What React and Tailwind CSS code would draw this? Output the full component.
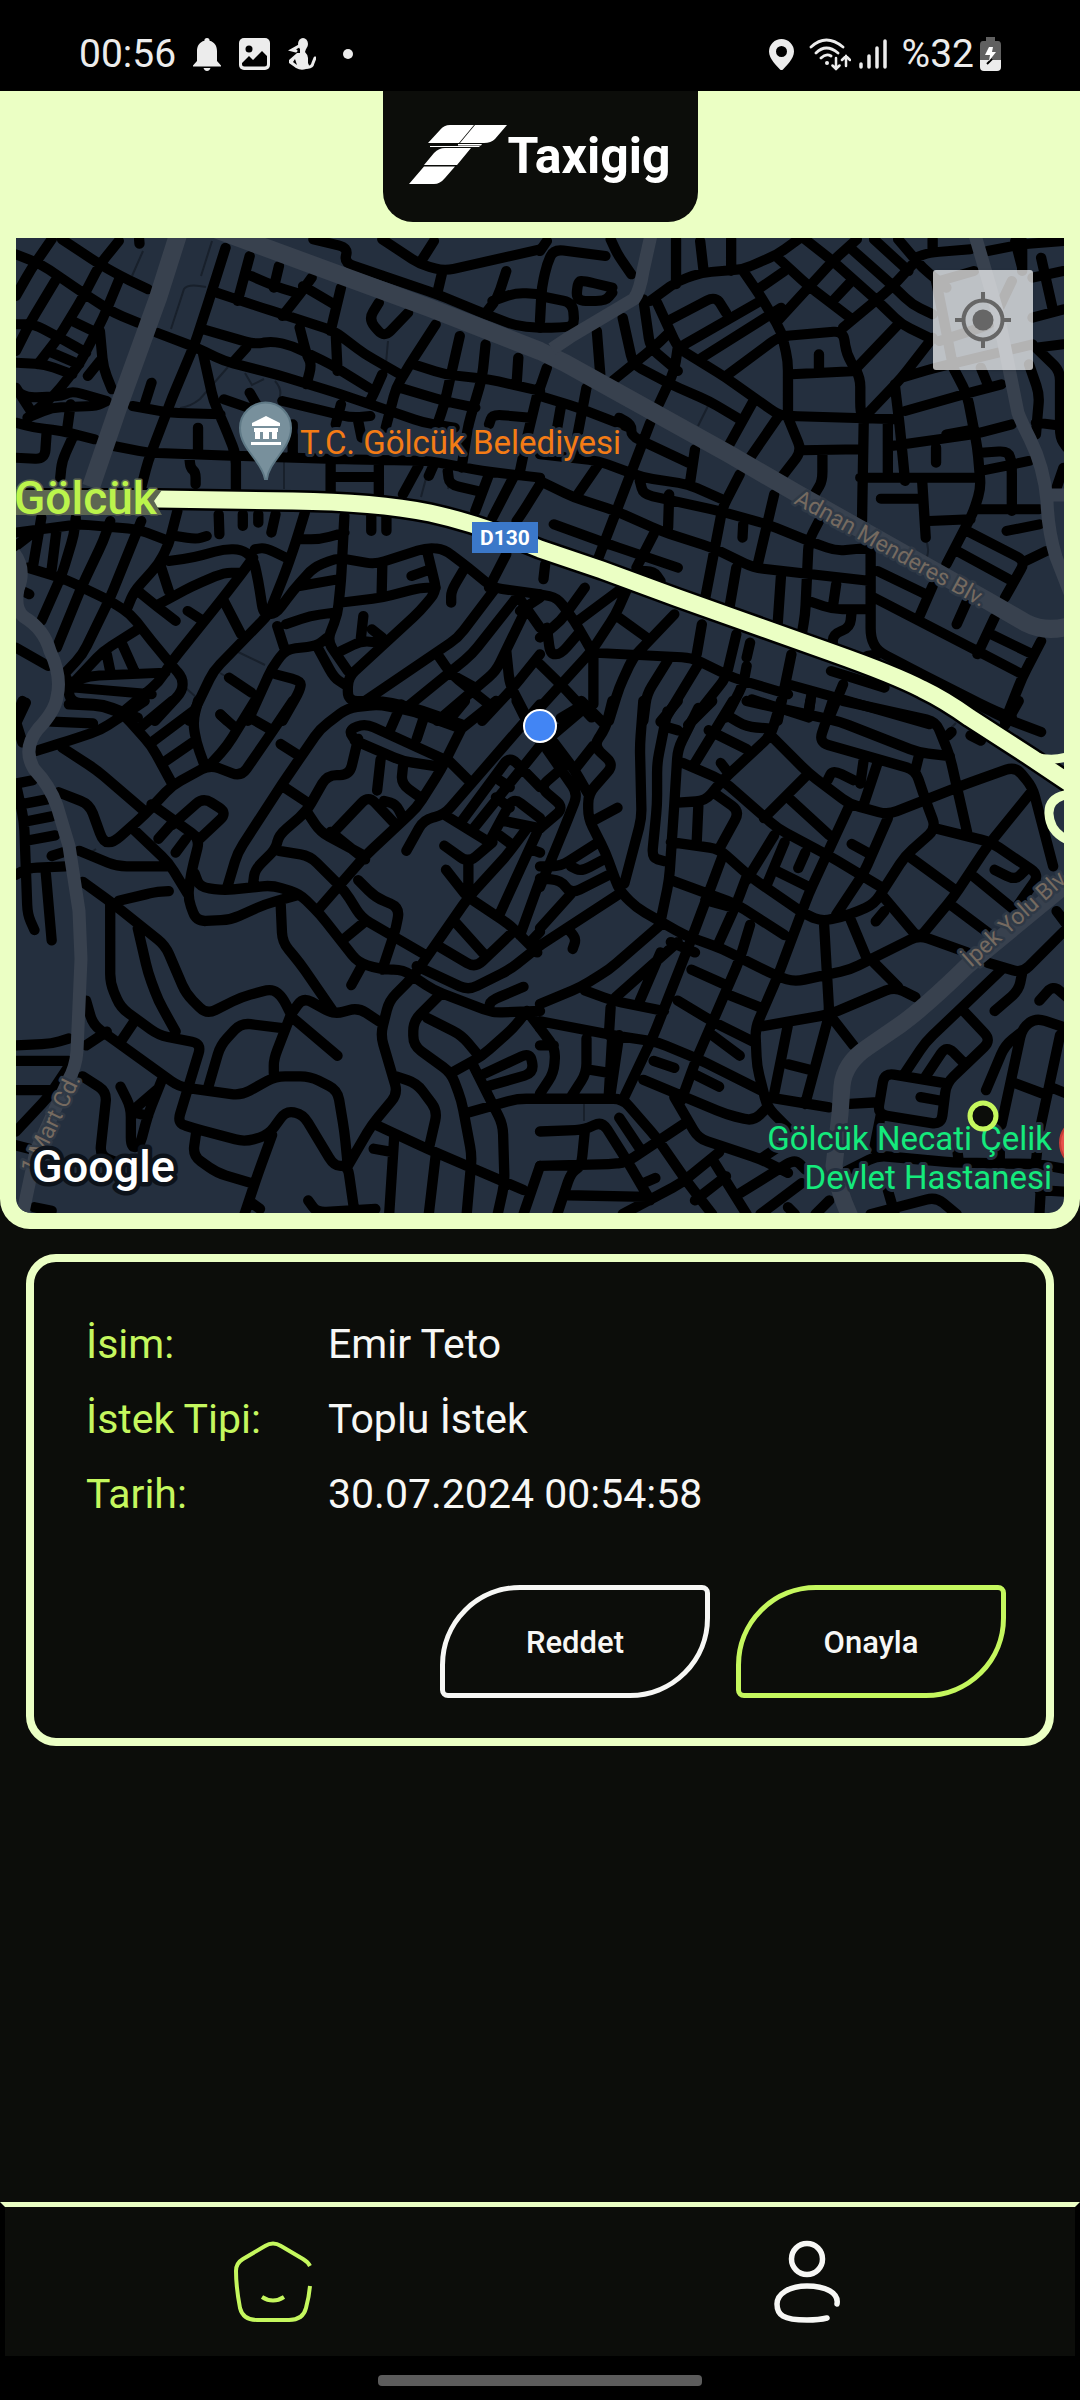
import React from "react";

/* Each road is a run of "x y" pairs; roads are separated by "|". */
const NW = `46 100 120 130 240 215 330 275 400 305|150 55 90 145 46 225|180 55 290 130 350 165 430 205|345 60 290 130 240 230 170 350 110 430|160 180 90 300 46 390|350 165 300 290 230 430 160 520 80 590|46 310 100 310 190 360 250 395|210 300 290 340|150 395 230 430|46 425 130 430 210 460|290 330 300 440 325 505|290 420 255 465|46 510 80 530 180 525 210 510 310 540|46 500 90 570|80 590 150 560 280 555 310 540|46 605 100 620 180 630 275 655|205 550 195 625|135 640 130 715 46 710|215 640 180 720 175 770|404 55 405 68|440 485 420 550|655 80 600 260 565 370 500 530 430 720 410 800|455 335 570 380 650 420 800 460 960 510 1090 555 1230 605 1320 620|385 555 490 575 640 580|590 400 620 540 650 610 685 700 685 810|590 325 740 370 790 360 850 375 960 430 1070 500|715 380 680 420|630 215 760 260 970 330 1060 400 1170 465|725 105 690 240|810 135 795 200|730 165 795 195 860 215|905 170 870 220 820 285|880 195 970 250|990 200 960 330|870 320 890 400 905 430 890 490|975 340 980 450|1100 245 1070 295 1115 350 1185 275|910 55 1010 80 1000 125 1100 160 1270 220 1410 280 1500 315 1568 320|1110 55 1220 130 1290 150 1568 85|1260 60 1220 125|1285 150 1270 215|1470 150 1445 230 1415 270|1430 240 1500 215 1568 220|1265 310 1190 430 1150 500 1120 620|1335 345 1290 550 1270 610|1200 430 1290 460 1420 475 1568 510|1410 370 1400 470 1360 610 1340 740|1505 410 1500 490|1160 500 1290 540 1380 560|1110 460 1080 530 1070 545|650 535 720 560|725 515 750 560|820 540 900 560 1020 590 1075 585|990 550 975 610|1040 600 1050 650|1420 610 1430 580 1540 590|1565 500 1530 650 1510 750|850 610 850 700|330 675 430 695 700 705 1000 715 1250 720 1400 750 1568 770|575 620 575 690|550 710 553 740 568 755 568 790|960 730 960 820|960 768 1100 768|1100 730 1100 820|1215 735 1170 820|1260 730 1245 765|1300 750 1305 790 1385 810|1420 760 1380 870|1490 770 1430 890|1568 790 1520 870 1500 900|635 880 637 940|705 880 705 915|750 880 750 905|800 880 788 935|515 870 490 970 460 1030 390 1110 370 1160|885 875 860 960 830 1050 780 1180 620 1350 550 1500|46 935 230 910 400 925 490 960|46 975 90 940|120 890 95 1040|165 920 150 1045|220 890 215 940 180 1060 120 1200|320 900 300 960 240 1090 165 1280|410 900 320 1130 240 1300 195 1350|80 1040 190 1075 320 1140 380 1180 440 1260 500 1335 530 1370 530 1410 450 1500|65 1110 85 1120|510 945 570 955 600 945|490 1020 560 1010 650 985 700 985 735 1010 750 1080 765 1180 800 1180 850 1110 910 1040 980 1010 1090 1030 1240 980 1290 985 1360 1040 1430 1100 1568 1120|740 985 770 980 830 1010|465 1030 490 1110|400 1110 460 1160 510 1200|460 1150 560 1095 650 1055 700 1055|735 1010 700 1060 640 1140 500 1320 460 1385 360 1470|545 1170 590 1200|650 1140 700 1240|1000 885 990 1080 980 1180 950 1260 1010 1350|870 955 930 955 1000 935|870 1095 980 1075|990 1145 1110 1130 1220 1100 1265 1100|1110 1035 1108 1125|1240 990 1268 1110 1220 1170 1010 1370 1010 1440 1110 1440 1200 1460 1340 1510|1195 1065 1250 1045|1350 1040 1310 1110 1310 1145|1078 885 1078 930|1122 885 1122 930|830 1210 900 1185 970 1175|805 1215 825 1280|720 1500 790 1340 830 1285 920 1275 950 1250|920 1275 970 1370 1000 1390|1055 1185 1048 1250|990 1290 1050 1260 1100 1265|1080 1225 1110 1250|800 1360 875 1380 870 1410 820 1500|665 1370 730 1415|640 1480 660 1500|200 1400 300 1290 400 1225|310 1300 320 1350|355 1270 390 1350|200 1385 260 1365 480 1355|215 1400 440 1420|190 1360 205 1445 300 1450 400 1490|46 1280 140 1335|75 1445 50 1500|1470 1000 1420 1100|1440 1100 1330 1250 1060 1440|1500 1130 1370 1300 1180 1460|1520 1180 1440 1350 1270 1500|1270 1300 1310 1360 1420 1450|1500 1120 1568 1220|1568 1130 1510 1170|1470 1290 1480 1390 1530 1490|1568 1300 1490 1400 1400 1500|1310 1360 1380 1400`;
const NE = `0 90 20 60|190 105 40 85 20 130 5 200 0 300|210 200 130 180 110 180 105 240 190 240 210 215|0 225 95 245 100 315 60 320 0 320|205 55 225 100 265 160|395 55 395 190|465 60 475 150|555 55 555 150|210 480 330 380 370 340|320 240 400 180 470 155 590 145 690 100 770 40|300 235 320 380 400 450|340 245 400 380 540 470 690 580 720 585 1040 595|240 290 270 430 380 490 490 540 580 595|165 330 175 460|400 380 390 450 345 550|590 150 640 225 700 330 720 420 720 580|380 295 510 225 540 275|420 370 640 240|470 410 700 260|540 465 690 350 720 345|640 200 710 150|690 110 780 195 900 290|770 55 850 120 980 240 1050 310 1130 350|920 55 850 120 690 300|900 80 1020 190 1080 250 1140 280|1100 110 1020 200 880 320|970 55 1070 150|1040 55 1110 140 1180 200|900 185 850 240|1090 110 1130 95 1250 85|1140 55 1140 90|1300 90 1400 70 1520 60|710 345 880 330 890 400 930 470 930 570 940 600|810 400 810 450|730 460 920 450|1040 310 920 440|1140 350 1050 470 940 590|1050 470 1150 440 1430 370|1150 180 1160 230 1200 440|1160 180 1260 150|1160 360 1310 310 1370 180|1030 490 1045 620 1060 780|1060 570 1230 520 1340 490|1200 440 1240 520 1270 680 1280 800 1260 870 1180 1030|1280 440 1300 490|940 600 935 900|1010 600 1010 770|930 770 1270 770|1020 675 1260 640 1370 610|1180 640 1260 625|1150 680 1150 725|990 833 1110 833|1110 785 1120 950|1130 900 1250 895|1280 695 1360 690 1370 730 1370 870|1280 750 1420 720|1270 865 1450 865|1355 930 1450 910|1240 930 1410 1020 1350 1130|1410 1020 1470 990|1210 990 1370 1080|1140 1095 1100 1190|980 1050 1120 1120|970 1130 1270 1290 1400 1360|1320 1190 1270 1300|1310 1240 1430 1300|1240 1140 1210 1210|1455 1260 1400 1370 1350 1500|1380 60 1400 140|1400 60 1400 150|1455 110 1490 270|1430 170 1520 150|1430 290 1520 265|1440 380 1520 370|1440 380 1510 450 1510 650 1530 680|1420 430 1450 520 1440 640|1440 605 1520 615|1520 740 1500 800|0 525 110 560 260 620|20 440 0 500|135 500 100 690|60 560 50 620|230 590 265 610 265 645 440 730|320 605 270 740 170 1010|450 685 435 790|0 700 170 720 300 770 430 790 540 840|170 730 110 820|0 780 100 830 220 870 350 930 500 980 620 1040 960 1080|290 780 300 820 520 870 660 910 780 960 860 990 960 980|375 820 372 920|40 910 200 970 400 1040|330 940 280 1040|280 1050 330 1050 350 1080|620 540 550 670|690 590 610 710|580 760 530 860 480 1130|680 820 630 1040|590 910 588 950|720 590 760 690 700 770|760 688 930 685|820 690 820 780 800 815|810 900 780 960 770 1180 760 1240|570 1040 550 1160|700 1060 690 1210|860 1090 850 1160|780 1140 850 1165 960 1165|960 980 960 1250 980 1290 1110 1360 1300 1460 1370 1490|905 1170 900 1220 850 1240 850 1285|15 1030 10 1075|130 1100 60 1200 0 1250|0 1120 50 1130 100 1200 150 1290|240 1100 110 1200|250 1110 220 1180 150 1290 0 1460|20 1220 30 1300 60 1300 110 1240|230 1190 310 1250|390 1180 270 1310 230 1400 200 1500|150 1295 440 1310 560 1370 720 1420|155 1300 155 1450|0 1330 60 1390 150 1490|470 1210 455 1300|570 1240 540 1370 440 1500|610 1265 600 1310|600 1335 590 1390 540 1490|370 1320 310 1420 300 1500|460 1330 360 1500|730 1300 710 1400 690 1500|720 1390 860 1430 1130 1510|845 1350 1000 1400|880 1390 840 1490|790 1410 780 1470|615 1435 780 1490|980 1300 950 1305`;
const SW = `105 145 200 115 290 85 360 40 420 0|150 60 270 65|200 10 300 15 360 40 440 130 500 240|180 135 280 200 420 320|65 0 46 50|46 60 65 120|46 240 95 230|60 300 140 285|75 350 150 335|80 405 160 390|46 240 70 350 80 620 100 665|46 505 80 485 190 480|150 450 180 440|133 500 150 695|170 265 260 300 300 410 330 410 420 330 500 245 610 185 700 220 790 90 850 0|610 185 660 130 740 0|575 0 560 60 570 120 595 190|410 75 500 0|440 120 560 30|480 175 560 120|640 40 680 75|720 45 790 85|385 370 490 470 545 560|440 300 580 400 555 500 545 570 570 640 670 635 770 590 860 565|500 360 590 280 660 325 580 400|500 355 460 400|540 400 510 440|230 435 340 480 490 480|565 500 580 540 650 550 790 535 870 560 930 620 1040 760 1110 780 1170 780 1260 840 1430 905 1568 900|660 540 690 440 820 240 930 80 1010 20 1100 10 1200 30 1340 80|815 125 870 160|825 250 900 300|735 530 740 490 800 430 810 390 890 320 950 215 1015 215 1040 110|810 435 900 450 1000 550 1050 630 1240 740|890 320 930 380 1060 450|960 380 1060 460|1340 80 1280 200 1210 310 1060 450 920 610|1030 115 1170 175 1270 190|1040 125 1010 85 1060 65 1290 170|1165 10 1130 90|1230 50 1210 110|1105 170 1095 260|1170 190 1165 240 1220 280|960 390 1070 275 1150 360|1115 290 1150 300 1170 340|1300 170 1360 230|1568 10 1290 330 1230 345 1180 435|1290 330 1420 410|1340 80 1440 0|1300 60 1350 0|1500 0 1530 60|1290 420 1360 470 1430 410|1360 470 1360 570|1295 490 1350 560|1530 370 1470 450 1360 570 1200 800 1130 870 1105 970 1155 1140 1080 1230 1010 1350|1360 570 1480 650 1560 730|1320 640 1410 740|1270 710 1380 775 1490 670|1040 520 1090 570 1160 600 1150 660 1110 780|1060 640 1000 690|1050 770 1020 825|1340 350 1480 160 1568 250|1375 370 1568 130|1450 230 1480 250|1420 410 1490 280 1568 340|1440 280 1480 310|1470 350 1568 370|1450 390 1490 420|1540 430 1568 440|1450 620 1560 380|1510 680 1568 520|1540 700 1568 670|240 525 330 590 480 710 540 850 600 910 700 860 790 835 820 860 845 910|850 920 980 1030|345 580 450 555 490 552|320 590 320 820 350 890 460 970 585 995 515 1225 560 1240 710 1280 780 1260 830 1190 880 1200 970 1350 1010 1350 1030 1490|400 660 430 790 460 870 510 960|390 930 350 990|250 870 270 940 520 1120 700 1145 800 1090 900 1090 980 1130 1000 1250 1010 1350|250 1000 310 960|46 1000 150 995 200 980|46 1045 200 1045|46 1130 150 1130|200 1060 140 1150 46 1250|46 1290 85 1300|240 1090 310 1135 290 1320 340 1340|350 1120 380 1180 380 1295 405 1295 430 1200 470 1100|390 1185 460 1125|390 1195 430 1205|815 590 820 700 870 760 970 905|845 910 880 860 970 910 1040 890 1100 930|845 910 795 1040 795 1080|605 1120 640 1000 700 935 820 950|570 1250 560 1320 630 1370 730 1400|790 1260 750 1370 710 1490|895 1450 920 1485 1090 1475|735 1460 755 1475|100 1470 150 1480|1090 1230 1240 1300 1520 1420|1145 1260 1130 1490|1085 1300 1140 1310|1265 1320 1245 1490|1150 1090 1210 1110 1270 1190 1245 1300|1280 850 1200 930 1200 1000 1310 1080 1340 1160 1370 1320 1355 1490|1240 920 1340 970 1390 1030|1310 1080 1400 1030 1490 950 1530 900|1370 1050 1460 1230 1465 1400 1445 1490|1360 1195 1500 1155 1568 1155|1390 1090 1540 1020 1550 1080 1410 1120|1210 770 1360 840 1480 780 1568 710|1420 890 1425 870 1520 830|1530 900 1568 950|1568 1350 1520 1490`;
const SE = `120 0 190 70|210 0 190 80 155 130 215 185 140 270 140 340 190 440 230 550 280 600 420 680 530 720 690 800 740 815 900 780 1100 680 1240 730|155 130 100 200|300 0 290 130 295 340 245 530|370 30 340 180 340 300 325 455 360 465|460 20 400 140 390 300 375 520 350 640|365 75 400 85|400 0 350 60|500 0 430 70|560 0 450 180|540 40 600 75 670 80|490 85 600 140|415 180 530 230 690 370 840 450 990 540|700 0 670 100 530 230 480 290 400 295|525 180 540 200|460 300 455 410|510 270 580 320 520 430|380 410 520 430 610 510 770 620 820 640 900 620 970 590 1060 450 1150 370 1120 290 1090 200 810 120 850 0|600 0 870 60 1100 150 1190 160|880 0 1150 60 1190 160 1240 380|785 0 780 40|1100 160 1090 200|670 100 780 210 900 300 1010 330 1240 240 1380 190 1430 250 1490 480|780 210 650 340|720 280 840 390|940 170 930 240|835 230 850 200 910 230|980 180 940 300|900 300 780 560 690 800 625 950 630 1060 660 1180 720 1240|1010 340 940 500 860 620|905 415 950 440|1150 370 1310 410 1450 505 1390 590|1430 260 1300 420 1200 570 1100 690 990 560|1320 490 1380 520 1410 490|1260 510 1370 600|1070 450 1200 545|1190 590 1310 680|1500 610 1530 650|680 390 600 520|710 410 660 530|770 440 750 485|680 490 780 540|380 520 570 590 710 680|530 450 440 690 330 970 240 1160|600 510 570 590 520 700|480 578 560 600|480 560 570 590|610 650 580 750 450 1050 410 1160|0 880 120 830 200 780 350 650|130 840 210 870 360 900|400 700 220 860|350 730 290 870|380 700 450 730|440 780 530 820|540 850 640 890|400 870 500 930 620 990|0 930 210 970 340 990 460 1040 640 1130|205 890 200 970|230 970 205 1140|210 970 200 1140|0 1155 240 1155 340 1270 430 1400 500 1490|135 980 135 1080 90 1150|140 1070 200 1080|0 950 45 1010 40 1080 0 1140|0 1000 40 1000|300 1100 540 1200 620 1220 660 1180|330 1045 390 1065|450 1085 520 1120|500 970 580 1030|390 1150 460 1270 640 1330 720 1370|430 1220 250 1340 200 1345 0 1350|0 1250 130 1245 180 1220 250 1330 320 1450|230 1210 290 1300|130 1250 120 1350 90 1370 50 1490|80 1435 310 1440|240 1490 410 1400 520 1310|300 1400 335 1385|500 1330 600 1490|450 1450 540 1380|580 1430 740 1330 770 1360|640 1490 760 1400|720 1470 740 1490|640 1330 700 1290|800 1490 840 1450|640 945 840 910 1030 830 1090 860|825 650 840 910 770 1170|840 910 910 1000|970 760 1040 830|900 630 950 750|720 940 680 1140|720 1055 780 1070|660 1150 840 1180|900 1170 980 1165|1000 610 975 640|1300 760 1400 790 1530 660|1340 780 1120 990 1060 1080|1400 790 1390 840 1320 900|1230 900 1310 985 1180 1110 1165 1230 980 1200 1000 1080 1180 1110|1120 1090 1180 1000 1230 1050|1105 1150 1160 1160|1450 870 1490 825 1530 860|1530 950 1440 920 1400 950 1340 1230|1400 960 1350 1000 1295 1130|1510 970 1450 1250|1380 1110 1460 1140|1480 1120 1530 1140|880 1370 980 1320 1200 1340 1450 1345 1530 1360|990 1200 970 1300|1210 1290 1215 1330|1335 1290 1335 1340|1445 1290 1440 1340|1010 1420 1030 1490|960 1490 1150 1440 1210 1490|1455 1400 1450 1490|1450 1420 1530 1425|1250 0 1350 50 1455 90|1390 0 1350 70|1185 100 1195 90|1250 100 1280 115|0 480 60 480 170 410|90 480 120 495 185 460|0 515 60 520 90 560 210 500|0 660 90 560|0 710 230 560|80 660 105 690 95 720|160 345 225 310|0 130 130 20|20 140 110 270 70 370 0 540|70 190 0 250 70 310 0 370|40 120 100 200 140 270|60 50 110 20`;

const TILES = [
  { roads: NW, at: "translate(0 220) scale(0.3444 0.3333)" },
  { roads: NE, at: "translate(540 220) scale(0.3444 0.3333)" },
  { roads: SW, at: "translate(0 700) scale(0.3444)" },
  { roads: SE, at: "translate(540 700) scale(0.3444)" },
];

/* Turns the runs of points into one path with softly rounded bends. */
function roadPath(source) {
  return source
    .split("|")
    .map((run) => {
      const n = run.trim().split(/\s+/).map(Number);
      const p = [];
      for (let i = 0; i + 1 < n.length; i += 2) p.push([n[i], n[i + 1]]);
      let d = `M${p[0][0]} ${p[0][1]}`;
      for (let i = 1; i < p.length - 1; i++) {
        const [a, b, c] = [p[i - 1], p[i], p[i + 1]];
        const cut = (q) => {
          const len = Math.hypot(q[0] - b[0], q[1] - b[1]) || 1;
          const t = Math.min(0.45, 28 / len);
          return [b[0] + (q[0] - b[0]) * t, b[1] + (q[1] - b[1]) * t];
        };
        const s = cut(a);
        const e = cut(c);
        d += `L${s[0]} ${s[1]}Q${b[0]} ${b[1]} ${e[0]} ${e[1]}`;
      }
      const z = p[p.length - 1];
      return d + `L${z[0]} ${z[1]}`;
    })
    .join("");
}

const HIGHWAY =
  "M10 498L158 498L293 500Q375 501 430 512Q480 523 540 548L602 569L678 597L833 652Q895 674 922 688Q945 699 970 717L1032 757L1072 784";

function CityMap() {
  return (
    <svg
      viewBox="16 237 1048 975"
      className="block w-full font-[Roboto,sans-serif]"
      role="img"
      aria-label="Gölcük haritası"
    >
      <rect x="16" y="237" width="1048" height="975" fill="#242f3e" />
      <g fill="none" stroke="#18202b" strokeWidth="2">
        <path d="M143 250L132 275M212 240L201 275M171 328L184 288Q188 282 206 286M228 366L200 398Q190 406 180 407M245 372L252 384L264 378M275 380Q284 390 278 400M388 340L386 362M284 460V488M429 466L421 496M448 488L452 472M236 650L265 664M220 672L230 678M180 682L196 696M708 405L698 425M925 538Q930 546 927 556M584 1098V1120M96 848L90 852M956 722L948 730" />
      </g>
      <g fill="none" stroke="#000" strokeWidth="30" strokeLinecap="round" strokeLinejoin="round">
        {TILES.map((t) => (
          <path key={t.at} transform={t.at} d={roadPath(t.roads)} />
        ))}
      </g>
      <g fill="none" stroke="#38414e" strokeLinejoin="round">
        <path strokeWidth="18" d="M178 234L158 297L117 410L91 486" />
        <path strokeWidth="18" d="M215 228L310 263L430 307L540 350L565 362L729 453L798 493L988 600L1026 622Q1046 632 1070 625" />
        <path strokeWidth="13" d="M651 234L643 270Q640 290 634 298L570 336L552 348" />
        <path strokeWidth="13" d="M975 234L998 313L1018 412Q1021 420 1030 438Q1044 466 1047 500Q1048 530 1056 556L1070 592M1047 494H1070" />
        <path strokeWidth="17" d="M1070 880L967 965Q925 1006 900 1024L868 1046Q844 1062 842 1085L840 1113L834 1165Q838 1190 852 1220" />
        <path strokeWidth="13" d="M14 552Q26 568 18 588Q14 608 24 616Q44 628 50 650Q62 675 57 696Q55 710 38 728Q22 748 34 768Q50 785 57 805L69 845L79 910L81 958L77 1050Q76 1066 68 1080L36 1150L22 1216" />
      </g>
      <path d={HIGHWAY} fill="none" stroke="#000" strokeWidth="22" />
      <g fill="none" stroke="#ebffc4">
        <path d={HIGHWAY} strokeWidth="17" />
        <path strokeWidth="9" d="M1018 748Q1044 764 1070 755M1070 793Q1048 796 1049 813Q1050 832 1070 840" />
      </g>

      <path d="M16 489H152L162 489L154 500L162 514H16Z" fill="#5d6651" />
      <g strokeLinejoin="round" paintOrder="stroke">
        <text x="14" y="513" fontSize="46" fontWeight="500" fill="#bbf44c" stroke="#5d6651" strokeWidth="3">Gölcük</text>
        <g fill="#f47c15" stroke="#242f3e" strokeWidth="6" fontSize="33">
          <text x="300" y="453">T.C. Gölcük Belediyesi</text>
        </g>
        <g fill="#14ea7c" stroke="#242f3e" strokeWidth="6" fontSize="33" textAnchor="end">
          <text x="1052" y="1149">Gölcük Necati Çelik</text>
          <text x="1052" y="1188">Devlet Hastanesi</text>
        </g>
        <g fill="#756a60" stroke="#2f3946" strokeWidth="5" fontSize="23">
          <text transform="translate(793 502) rotate(29)">Adnan Menderes Blv.</text>
          <text transform="translate(971 967) rotate(-42)">İpek Yolu Blv.</text>
          <text transform="translate(34 1174) rotate(-64)">1 Mart Cd.</text>
        </g>
        <text x="32" y="1181" fontSize="45" fontWeight="500" fill="#fff" stroke="#0c121a" strokeWidth="9">Google</text>
      </g>

      <path d="M265 478C262 460 240 448 240 427A25.5 25.5 0 0 1 291 427C291 448 269 460 267 478Z" fill="#78909c" stroke="#5f7986" strokeWidth="2" />
      <path d="M266 415L252 422V425H280V422ZM254 427H278V431H254ZM255 431H260V438H255ZM263 431H269V438H263ZM272 431H277V438H272ZM251 441H281V444H251Z" fill="#fff" />

      <rect x="472" y="521" width="66" height="31" fill="#3b78c9" />
      <text x="505" y="544" fontSize="21" fontWeight="700" textAnchor="middle" fill="#fff">D130</text>

      <circle cx="540" cy="725" r="16" fill="#4285f4" stroke="#fff" strokeWidth="2" />
      <circle cx="983" cy="1115" r="13" fill="#0c0d0a" stroke="#c5f75e" strokeWidth="5" />
      <circle cx="1085" cy="1142" r="25" fill="#e8524b" stroke="#c43d36" strokeWidth="2" />
    </svg>
  );
}

function StatusBar() {
  return (
    <header className="flex h-[91px] items-center justify-between bg-black pt-[17px] pr-[79px] pl-[79px] text-[39px] leading-none text-[#ececec]">
      <div className="flex items-center">
        <time>00:56</time>
        <svg className="ml-[17px]" width="28" height="33" viewBox="0 0 28 33" fill="currentColor" aria-hidden="true">
          <path d="M14 0C15.800 0 16.600 1 16.600 2.800C21.500 4 24 8 24 13V23L28 27.500V28.500H0V27.500L4 23V13C4 8 6.500 4 11.400 2.800C11.400 1 12.200 0 14 0ZM10.500 30H17.500Q16.500 33 14 33T10.500 30Z" />
        </svg>
        <svg className="ml-[18px]" width="31" height="32" viewBox="0 0 31 32" aria-hidden="true">
          <rect width="31" height="32" rx="5" fill="currentColor" />
          <circle cx="10" cy="11" r="3.500" fill="#000" />
          <path d="M3 25L10 18L14 22L23 13L28 18V26Q28 28.500 25.500 28.500H5.500Q3 28.500 3 26Z" fill="#000" />
        </svg>
        <svg className="ml-[18px]" width="28" height="33" viewBox="0 0 28 33" fill="none" stroke="currentColor" aria-hidden="true">
          <ellipse cx="15" cy="6" rx="5" ry="6" fill="currentColor" stroke="none" />
          <path d="M12 11L18 11L17 14Q20 17 20 20V25Q23 30 18 31Q13 33 8 30L1 25V22L9 15H12ZM7 21L5 24L9 27Z" fill="currentColor" fillRule="evenodd" stroke="none" />
          <path d="M11 8L4 12L8 13M18 29Q24 30 25 25L27 20" strokeWidth="3" strokeLinecap="round" />
        </svg>
        <span className="ml-[27px] size-[10px] rounded-full bg-[#ececec]" />
      </div>
      <div className="flex items-center">
        <svg width="25" height="31" viewBox="0 0 25 31" fill="currentColor" aria-hidden="true">
          <path fillRule="evenodd" d="M12.500 0A12.500 12.500 0 0 1 25 12.500C25 20 17 27 14 30.500Q12.500 31.500 11 30.500C8 27 0 20 0 12.500A12.500 12.500 0 0 1 12.500 0ZM12.500 7A5.500 5.500 0 1 0 12.500 18A5.500 5.500 0 1 0 12.500 7Z" />
        </svg>
        <svg className="ml-[15px]" width="42" height="33" viewBox="0 0 42 33" fill="none" stroke="currentColor" strokeWidth="2.800" strokeLinecap="round" aria-hidden="true">
          <path d="M2 9Q17 -5 34 9M7 15Q17 5 29 15M12 20Q17 15 22 18" />
          <circle cx="18" cy="25" r="2" fill="currentColor" stroke="none" />
          <path d="M27 20V31M23.500 27.500L27 31L30.500 27.500M37 28V18M33 22L37 18L41 22" strokeWidth="2.500" />
        </svg>
        <svg className="ml-[8px]" width="28" height="32" viewBox="0 0 28 32" stroke="currentColor" strokeWidth="3.500" strokeLinecap="round" aria-hidden="true">
          <path d="M2 26V29M10 18V29M18 10V29M26 3V29" />
        </svg>
        <span className="ml-[15px]">%32</span>
        <svg className="ml-[6px]" width="21" height="34" viewBox="0 0 21 34" aria-hidden="true">
          <path d="M6 0H15V4H18Q21 4 21 8V24H0V8Q0 4 3 4H6Z" fill="#606060" />
          <path d="M0 23H21V30Q21 34 17 34H4Q0 34 0 30Z" fill="currentColor" />
          <path d="M7 27L12 22" stroke="#000" strokeWidth="2" />
          <path d="M9 10H13L12 15H16L9 24L10 18H5Z" fill="#fff" />
        </svg>
      </div>
    </header>
  );
}

function Brand() {
  return (
    <h1 className="mx-auto flex h-[131px] w-[315px] items-start justify-center rounded-b-[30px] bg-[#0c0d0a] pt-[34px] text-white">
      <svg width="98" height="60" viewBox="0 0 98 60" fill="currentColor" className="shrink-0" aria-hidden="true">
        <path d="M19 18L31 5Q35 0 41 0H65L50 18ZM66 0H98L86 14Q82 18 75 18H51ZM49 19H73L72 20.500H49ZM21 21H71L70 22H21ZM15 40L25 28Q30 23 36 23H62L48 40ZM0 59L15 41.500H46L36 53Q31 59 25 59Z" />
      </svg>
      <span className="text-[50px] leading-[62px] font-bold">Taxigig</span>
    </h1>
  );
}

const DETAILS = [
  ["İsim:", "Emir Teto"],
  ["İstek Tipi:", "Toplu İstek"],
  ["Tarih:", "30.07.2024 00:54:58"],
];

export default function App() {
  return (
    <div className="flex min-h-screen flex-col bg-[#0c0d0a] font-[Roboto,sans-serif] text-[#f7f7f5]">
      <StatusBar />
      <main className="flex-1">
        <section className="rounded-b-[30px] bg-[#ebffc4] px-4 pb-4">
          <Brand />
          <div className="relative mt-4 overflow-hidden rounded-b-[15px]">
            <CityMap />
            <button
              type="button"
              aria-label="Konumum"
              className="absolute top-8 right-[31px] flex size-[100px] items-center justify-center rounded-[3px] bg-white/70 shadow"
            >
              <svg width="56" height="56" viewBox="0 0 56 56" fill="none" stroke="#666" strokeWidth="4" aria-hidden="true">
                <circle cx="28" cy="28" r="19.500" />
                <circle cx="28" cy="28" r="10.500" fill="#666" stroke="none" />
                <path d="M28 0V8M28 48V56M0 28H8M48 28H56" />
              </svg>
            </button>
          </div>
        </section>

        <section className="mx-[26px] mt-[25px] rounded-[30px] border-8 border-[#ebffc4] pt-[45px] pr-10 pb-10 pl-[52px]">
          <dl className="grid grid-cols-[242px_1fr] text-[41px] leading-[75px]">
            {DETAILS.map(([label, value]) => (
              <React.Fragment key={label}>
                <dt className="text-[#c5f75e]">{label}</dt>
                <dd>{value}</dd>
              </React.Fragment>
            ))}
          </dl>
          <div className="mt-[53px] flex justify-end gap-[26px] text-[31px] font-medium">
            <button type="button" className="h-[113px] w-[270px] rounded-tl-[80px] rounded-tr-lg rounded-br-[80px] rounded-bl-lg border-5 border-[#f7f7f5] pt-1">
              Reddet
            </button>
            <button type="button" className="h-[113px] w-[270px] rounded-tl-[80px] rounded-tr-lg rounded-br-[80px] rounded-bl-lg border-5 border-[#c5f75e] pt-1">
              Onayla
            </button>
          </div>
        </section>
      </main>

      <nav className="grid h-[154px] grid-cols-2 border-x-5 border-t-5 border-x-black border-t-[#ebffc4]">
        <button type="button" aria-label="Ana sayfa" className="flex items-center justify-center text-[#c5f75e]">
          <svg width="80" height="82" viewBox="0 0 80 82" fill="none" stroke="currentColor" strokeWidth="4" aria-hidden="true">
            <path d="M77 25Q75 21 70 18L48 5Q40 0 32 5L10 18Q3 22 3 30Q3 46 7 67Q10 79 24 79H56Q70 79 73 67Q76 56 77 45M29 56Q40 63 51 56" />
          </svg>
        </button>
        <button type="button" aria-label="Profil" className="flex items-center justify-center">
          <svg width="68" height="86" viewBox="0 0 68 86" fill="none" stroke="currentColor" strokeWidth="5.500" strokeLinecap="round" aria-hidden="true">
            <ellipse cx="33" cy="20" rx="15.500" ry="15.500" />
            <path d="M63 65C65 54 52 47 33 47C15 47 3 55 3 65C3 76 9 81 33 81Q45 81 53 79" />
          </svg>
        </button>
      </nav>
      <footer className="flex h-11 items-center justify-center bg-black">
        <div className="mt-1 h-[11px] w-[324px] rounded bg-[#5c5c5c]" />
      </footer>
    </div>
  );
}
